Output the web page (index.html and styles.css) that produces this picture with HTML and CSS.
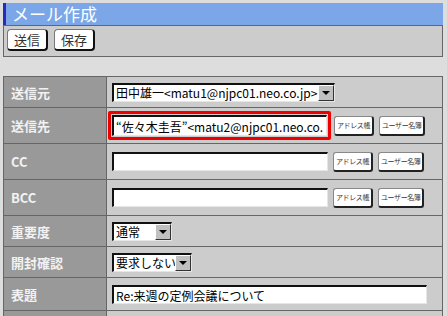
FILE: index.html
```html
<!DOCTYPE html>
<html lang="ja">
<head>
    <meta charset="UTF-8">
    <title>メール作成</title>
    <link rel="stylesheet" href="styles.css">
</head>
<body>
    <div class="title">メール作成</div>
    <div class="toolbar">
        <button class="btn">送信</button>
        <button class="btn">保存</button>
    </div>

    <table class="form">
        <tr class="r31">
            <th>送信元</th>
            <td>
                <div class="select w223"><span class="val">田中雄一&lt;matu1@njpc01.neo.co.jp&gt;</span><span class="arrow"></span></div>
            </td>
        </tr>
        <tr class="r36">
            <th>送信先</th>
            <td>
                <div class="line">
                    <div class="hilite"><div class="input w216">“佐々木圭吾”&lt;matu2@njpc01.neo.co.</div></div>
                    <button class="mini">アドレス帳</button>
                    <button class="mini">ユーザー名簿</button>
                </div>
            </td>
        </tr>
        <tr class="r36">
            <th>CC</th>
            <td>
                <div class="line">
                    <div class="input w216"></div>
                    <button class="mini">アドレス帳</button>
                    <button class="mini">ユーザー名簿</button>
                </div>
            </td>
        </tr>
        <tr class="r36">
            <th>BCC</th>
            <td>
                <div class="line">
                    <div class="input w216"></div>
                    <button class="mini">アドレス帳</button>
                    <button class="mini">ユーザー名簿</button>
                </div>
            </td>
        </tr>
        <tr class="r31">
            <th>重要度</th>
            <td>
                <div class="select w60"><span class="val">通常</span><span class="arrow"></span></div>
            </td>
        </tr>
        <tr class="r31">
            <th>開封確認</th>
            <td>
                <div class="select w80"><span class="val">要求しない</span><span class="arrow"></span></div>
            </td>
        </tr>
        <tr class="r33">
            <th>表題</th>
            <td>
                <div class="input w315">Re:来週の定例会議について</div>
            </td>
        </tr>
        <tr class="r31">
            <th></th>
            <td></td>
        </tr>
    </table>
</body>
</html>
```

FILE: styles.css
```css
body {
    margin: 3px;
    background-color: #dddddd;
    font-family: "MS PGothic", "Noto Sans CJK JP", sans-serif;
    font-size: 12px;
    width: 440px;
}
.title {
    height: 22px;
    line-height: 22px;
    background-color: #7ba7e8;
    border-left: 3px solid #2a2ab8;
    padding-left: 6px;
    color: #ffffff;
    font-size: 17px;
}
.toolbar {
    height: 32px;
    box-sizing: border-box;
    background-color: #cccccc;
    border: 1px solid #666666;
    padding: 3px 3px;
    display: flex;
    gap: 6px;
    align-items: flex-start;
}
.btn {
    font-family: inherit;
    font-size: 13px;
    color: #333333;
    background: #ffffff;
    border: 1px solid #777777;
    border-right: 2px solid #111111;
    border-bottom: 2px solid #111111;
    border-radius: 4px;
    height: 22px;
    padding: 0 6px;
    line-height: 18px;
}
.form {
    margin-top: 19px;
    width: 440px;
    border-collapse: collapse;
    border: 1px solid #666666;
}
.form th, .form td {
    border: 1px solid #666666;
    padding: 0 0 0 5px;
    text-align: left;
}
.form th {
    width: 95px;
    background-color: #999999;
    color: #f2f2f2;
    font-size: 13px;
    padding-left: 7px;
}
.form td {
    background-color: #cccccc;
}
.r31 { height: 31px; }
.r33 { height: 33px; }
.r36 { height: 36px; }
.line {
    display: flex;
    align-items: center;
}
.input {
    height: 19px;
    box-sizing: border-box;
    background: #ffffff;
    border-style: solid;
    border-width: 2px 1px 1px 2px;
    border-color: #111111 #e6e6e6 #e6e6e6 #111111;
    padding: 0 2px;
    font-size: 12px;
    line-height: 17px;
    white-space: nowrap;
    overflow: hidden;
    color: #000000;
}
.w216 { width: 216px; }
.w315 { width: 315px; }
.hilite {
    margin-left: -4px;
    border: 3px solid #ee0000;
    border-radius: 2px;
    padding: 1px;
}
.hilite .input {
    height: 21px;
    line-height: 19px;
    width: 215px;
}
.mini {
    font-family: inherit;
    font-size: 7px;
    letter-spacing: -0.4px;
    color: #333333;
    background: #ffffff;
    border: 1px solid #888888;
    border-right: 2px solid #222222;
    border-bottom: 2px solid #222222;
    border-radius: 3px;
    height: 20px;
    padding: 0 2px;
    margin-left: 5px;
    white-space: nowrap;
}
.hilite + .mini { margin-left: 3px; }
.select {
    display: flex;
    height: 19px;
    box-sizing: border-box;
    background: #ffffff;
    border-style: solid;
    border-width: 2px 1px 1px 2px;
    border-color: #111111 #e6e6e6 #e6e6e6 #111111;
}
.select .val {
    flex: 1;
    padding-left: 2px;
    line-height: 16px;
    white-space: nowrap;
    overflow: hidden;
}
.select .arrow {
    width: 14px;
    background: #c0c0c0;
    border-style: solid;
    border-width: 1px;
    border-color: #ffffff #333333 #333333 #ffffff;
    position: relative;
}
.select .arrow::after {
    content: "";
    position: absolute;
    left: 3px;
    top: 5px;
    border-left: 4px solid transparent;
    border-right: 4px solid transparent;
    border-top: 4px solid #000000;
}
.w223 { width: 223px; }
.w60 { width: 60px; }
.w80 { width: 80px; }
```
